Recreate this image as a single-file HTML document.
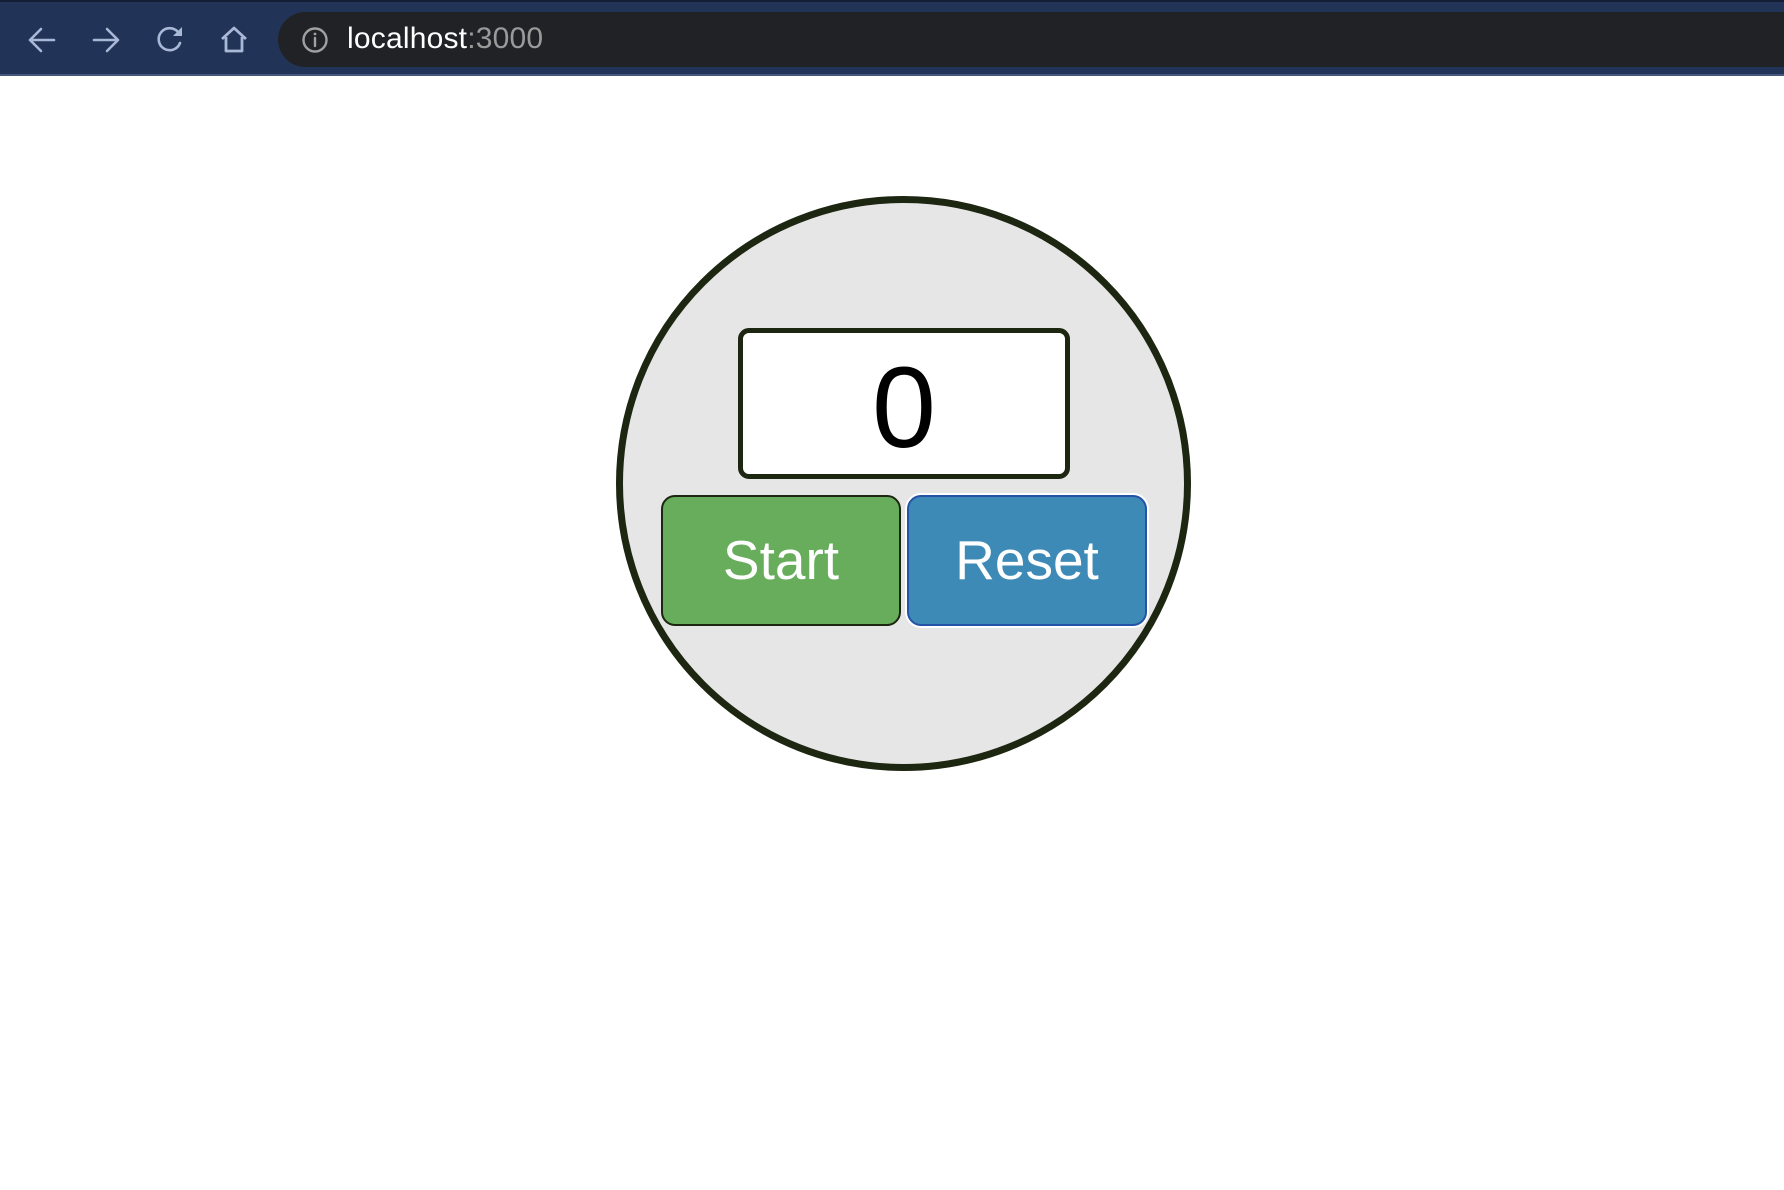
<!DOCTYPE html>
<html><head><meta charset="utf-8"><style>
html,body{margin:0;padding:0;width:1784px;height:1190px;background:#fff;overflow:hidden;font-family:"Liberation Sans",Arial,sans-serif;}
.bar{position:absolute;left:0;top:0;width:1784px;height:76px;background:#213457;border-top:2px solid #131d33;box-sizing:border-box;border-bottom:2px solid #45587a;}
.url{position:absolute;left:278px;top:10px;width:1540px;height:55px;border-radius:28px;background:#212226;}
.url .t{position:absolute;left:69px;top:10px;font-size:30px;color:#fff;letter-spacing:0.2px;}
.url .t span{color:#9a9a9a;}
svg.i{position:absolute;}
.circle{position:absolute;left:616px;top:196px;width:575px;height:575px;box-sizing:border-box;border:7px solid #1d2610;border-radius:50%;background:#e6e6e6;}
.disp{position:absolute;left:738px;top:328px;width:332px;height:151px;box-sizing:border-box;border:5px solid #1d2610;border-radius:11px;background:#fff;text-align:center;font-size:115px;line-height:151px;color:#000;}
.btn{position:absolute;top:495px;width:240px;height:131px;box-sizing:border-box;border-radius:14px;color:#fff;font-size:55px;text-align:center;line-height:127px;}
.start{left:661px;background:#67ad5c;border:2.5px solid #1d2610;}
.reset{left:907px;background:#3e8ab7;border:2.5px solid #2453a8;box-shadow:0 0 0 2px #fff;}
</style></head><body>
<div class="bar">
<svg class="i" style="left:26px;top:22px" width="32" height="32" viewBox="0 0 32 32" fill="none" stroke="#a9b8d6" stroke-width="2.6" stroke-linecap="round" stroke-linejoin="round"><path d="M28 16H4M15 5L4 16l11 11"/></svg>
<svg class="i" style="left:90px;top:22px" width="32" height="32" viewBox="0 0 32 32" fill="none" stroke="#a9b8d6" stroke-width="2.6" stroke-linecap="round" stroke-linejoin="round"><path d="M4 16h24M17 5l11 11-11 11"/></svg>
<svg class="i" style="left:155px;top:22px" width="32" height="32" viewBox="0 0 32 32" fill="none" stroke="#a9b8d6" stroke-width="2.6" stroke-linecap="round"><path d="M25 19a11 11 0 1 1-2-11"/><path d="M27 3v9h-9z" fill="#a9b8d6" stroke="none"/></svg>
<svg class="i" style="left:218px;top:22px" width="32" height="32" viewBox="0 0 32 32" fill="none" stroke="#a9b8d6" stroke-width="2.8" stroke-linejoin="round"><path d="M4 15L16 4l12 11M8 13v14h16V13"/></svg>
<div class="url">
<svg class="i" style="left:23px;top:14px" width="28" height="28" viewBox="0 0 28 28" fill="none" stroke="#a0a0a0" stroke-width="2.4"><circle cx="14" cy="14" r="11.5"/><path d="M14 12v8" stroke-linecap="round"/><circle cx="14" cy="8" r="1.4" fill="#a0a0a0" stroke="none"/></svg>
<div class="t">localhost<span>:3000</span></div>
</div>
</div>
<div class="circle"></div>
<div class="disp">0</div>
<div class="btn start">Start</div>
<div class="btn reset">Reset</div>
</body></html>
